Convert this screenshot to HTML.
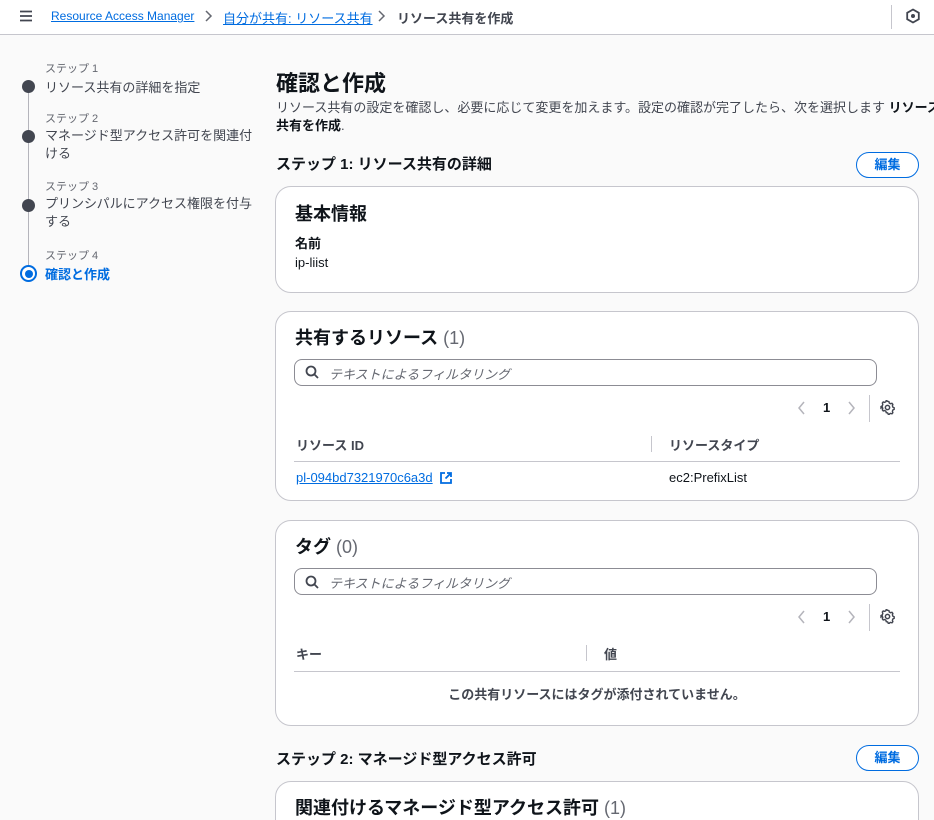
<!DOCTYPE html>
<html style="overflow:hidden;height:820px"><head><meta charset="utf-8"><style>
*{box-sizing:border-box;margin:0;padding:0}
body{width:934px;height:820px;overflow:hidden;background:#fafafa;font-family:"Liberation Sans","Noto Sans CJK JP",sans-serif;color:#0f141a;font-size:13px;position:relative}
.a{position:absolute;white-space:nowrap}
.hdr{position:absolute;left:0;top:0;width:934px;height:35px;background:#fff;border-bottom:1px solid #c6c6cd}
a{color:#006ce0;text-decoration:underline}
.sl{color:#656871;font-size:11px}
.dot{position:absolute;left:22px;width:13px;height:13px;border-radius:50%;background:#424650}
.card{position:absolute;left:275px;width:644px;background:#fff;border:1px solid #c6c6cd;border-radius:16px}
.h2{font-size:18px;font-weight:bold}
.cnt{color:#656871;font-weight:normal}
.btn{position:absolute;left:856px;width:63px;height:26px;border:1.5px solid #006ce0;border-radius:14px;color:#006ce0;font-weight:bold;font-size:13px;text-align:center;line-height:23px;background:#fff}
.srch{position:absolute;left:294px;width:583px;height:27px;border:1px solid #8c8c94;border-radius:8px;background:#fff}
.srch span{position:absolute;left:34px;top:5px;color:#656871;font-style:italic;font-size:13px}
.hr{position:absolute;left:294px;width:606px;height:1px;background:#c6c6cd}
.vd{position:absolute;width:1px;background:#c6c6cd}
</style></head><body>
<div class="hdr"></div>
<svg class="a" style="left:19px;top:9px" width="14" height="14" viewBox="0 0 14 14"><path d="M1 2.5h12M1 7h12M1 11.5h12" stroke="#424650" stroke-width="1.8"/></svg>
<div class="a" style="left:51px;top:8px;font-size:12px;top:9px"><a>Resource Access Manager</a></div>
<svg class="a" style="left:204px;top:10px" width="10" height="12"><path d="M2 1l5 5-5 5" stroke="#656871" stroke-width="1.5" fill="none"/></svg>
<div class="a" style="left:223px;top:8px"><a>自分が共有: リソース共有</a></div>
<svg class="a" style="left:377px;top:10px" width="10" height="12"><path d="M2 1l5 5-5 5" stroke="#656871" stroke-width="1.5" fill="none"/></svg>
<div class="a" style="left:397px;top:8px;color:#424650;font-weight:bold">リソース共有を作成</div>
<div class="vd" style="left:891px;top:5px;height:24px"></div>
<svg class="a" style="left:905px;top:8px" width="16" height="16" viewBox="0 0 16 16"><path d="M8 1.5l5.8 3.3v6.4L8 14.5 2.2 11.2V4.8z" fill="none" stroke="#424650" stroke-width="1.8"/><circle cx="8" cy="8" r="2" fill="#424650"/></svg>

<div class="vd" style="left:28px;top:90px;height:180px;background:#b4b4bb"></div>
<div class="a sl" style="left:45px;top:60px">ステップ 1</div>
<div class="dot" style="top:80px"></div>
<div class="a" style="left:45px;top:77px;color:#424650">リソース共有の詳細を指定</div>
<div class="a sl" style="left:45px;top:110px">ステップ 2</div>
<div class="dot" style="top:130px"></div>
<div class="a" style="left:45px;top:127px;color:#424650;line-height:18px">マネージド型アクセス許可を関連付<br>ける</div>
<div class="a sl" style="left:45px;top:178px">ステップ 3</div>
<div class="dot" style="top:199px"></div>
<div class="a" style="left:45px;top:195px;color:#424650;line-height:18px">プリンシパルにアクセス権限を付与<br>する</div>
<div class="a sl" style="left:45px;top:247px">ステップ 4</div>
<div class="a" style="left:20px;top:265px;width:17px;height:17px;border-radius:50%;border:2px solid #006ce0;background:#fff"></div>
<div class="a" style="left:24.5px;top:269.5px;width:8px;height:8px;border-radius:50%;background:#006ce0"></div>
<div class="a" style="left:45px;top:264px;color:#006ce0;font-weight:bold">確認と作成</div>

<div class="a" style="left:276px;top:66px;font-size:22px;font-weight:bold">確認と作成</div>
<div class="a" style="left:276px;top:99px;color:#424650;line-height:18px">リソース共有の設定を確認し、必要に応じて変更を加えます。設定の確認が完了したら、次を選択します <b style="color:#0f141a">リソース</b><br><b style="color:#0f141a">共有を作成</b>.</div>
<div class="a" style="left:276px;top:153px;font-size:15px;font-weight:bold">ステップ 1: リソース共有の詳細</div>
<div class="btn" style="top:152px">編集</div>

<div class="card" style="top:186px;height:107px"></div>
<div class="a h2" style="left:295px;top:200px">基本情報</div>
<div class="a" style="left:295px;top:233px;font-weight:bold">名前</div>
<div class="a" style="left:295px;top:255px">ip-liist</div>

<div class="card" style="top:311px;height:190px"></div>
<div class="a h2" style="left:295px;top:324px">共有するリソース <span class="cnt">(1)</span></div>
<div class="srch" style="top:359px"><span style="top:4px">テキストによるフィルタリング</span></div>
<svg class="a" style="left:305px;top:365px" width="14" height="14"><circle cx="6" cy="6" r="4.5" stroke="#424650" stroke-width="1.8" fill="none"/><path d="M9.5 9.5l3.5 3.5" stroke="#424650" stroke-width="1.8"/></svg>
<svg class="a" style="left:797px;top:401px" width="10" height="14"><path d="M7 1L2 7l5 6" stroke="#b4b4bb" stroke-width="1.5" fill="none"/></svg>
<div class="a" style="left:823px;top:400px;font-weight:bold">1</div>
<svg class="a" style="left:847px;top:401px" width="10" height="14"><path d="M2 1l5 6-5 6" stroke="#b4b4bb" stroke-width="1.5" fill="none"/></svg>
<div class="vd" style="left:869px;top:395px;height:27px"></div>
<svg class="a" style="left:880px;top:400px" width="15" height="15" viewBox="0 0 16 16"><path d="M8 1.5l1.5.3.4 1.6 1.4.8 1.6-.5 1 1.2-.5 1.6.5 1.5 1.5.8v1.6l-1.5.8-.5 1.5.5 1.6-1 1.2-1.6-.5-1.4.8-.4 1.6L8 14.5l-1.5-.3-.4-1.6-1.4-.8-1.6.5-1-1.2.5-1.6-.5-1.5L.6 9V7.3l1.5-.8.5-1.5-.5-1.6 1-1.2 1.6.5 1.4-.8.4-1.6z" fill="none" stroke="#424650" stroke-width="1.6" transform="translate(0.5 0) scale(.95)"/><circle cx="8" cy="8" r="2.3" fill="none" stroke="#424650" stroke-width="1.6"/></svg>
<div class="a" style="left:296px;top:435px;font-weight:bold;color:#424650">リソース ID</div>
<div class="vd" style="left:651px;top:436px;height:16px"></div>
<div class="a" style="left:669px;top:435px;font-weight:bold;color:#424650">リソースタイプ</div>
<div class="hr" style="top:461px"></div>
<div class="a" style="left:296px;top:470px"><a>pl-094bd7321970c6a3d</a></div>
<svg class="a" style="left:439px;top:471px" width="14" height="14"><path d="M6 2H2v10h10V8" stroke="#006ce0" stroke-width="1.8" fill="none"/><path d="M8 2h4v4M12 2L6.5 7.5" stroke="#006ce0" stroke-width="1.8" fill="none"/></svg>
<div class="a" style="left:669px;top:470px">ec2:PrefixList</div>

<div class="card" style="top:520px;height:206px"></div>
<div class="a h2" style="left:295px;top:533px">タグ <span class="cnt">(0)</span></div>
<div class="srch" style="top:568px"><span style="top:4px">テキストによるフィルタリング</span></div>
<svg class="a" style="left:305px;top:575px" width="14" height="14"><circle cx="6" cy="6" r="4.5" stroke="#424650" stroke-width="1.8" fill="none"/><path d="M9.5 9.5l3.5 3.5" stroke="#424650" stroke-width="1.8"/></svg>
<svg class="a" style="left:797px;top:610px" width="10" height="14"><path d="M7 1L2 7l5 6" stroke="#b4b4bb" stroke-width="1.5" fill="none"/></svg>
<div class="a" style="left:823px;top:609px;font-weight:bold">1</div>
<svg class="a" style="left:847px;top:610px" width="10" height="14"><path d="M2 1l5 6-5 6" stroke="#b4b4bb" stroke-width="1.5" fill="none"/></svg>
<div class="vd" style="left:869px;top:604px;height:27px"></div>
<svg class="a" style="left:880px;top:609px" width="15" height="15" viewBox="0 0 16 16"><path d="M8 1.5l1.5.3.4 1.6 1.4.8 1.6-.5 1 1.2-.5 1.6.5 1.5 1.5.8v1.6l-1.5.8-.5 1.5.5 1.6-1 1.2-1.6-.5-1.4.8-.4 1.6L8 14.5l-1.5-.3-.4-1.6-1.4-.8-1.6.5-1-1.2.5-1.6-.5-1.5L.6 9V7.3l1.5-.8.5-1.5-.5-1.6 1-1.2 1.6.5 1.4-.8.4-1.6z" fill="none" stroke="#424650" stroke-width="1.6" transform="translate(0.5 0) scale(.95)"/><circle cx="8" cy="8" r="2.3" fill="none" stroke="#424650" stroke-width="1.6"/></svg>
<div class="a" style="left:296px;top:644px;font-weight:bold;color:#424650">キー</div>
<div class="vd" style="left:586px;top:645px;height:16px"></div>
<div class="a" style="left:604px;top:644px;font-weight:bold;color:#424650">値</div>
<div class="hr" style="top:671px"></div>
<div class="a" style="left:294px;width:606px;top:684px;text-align:center;font-weight:bold;color:#424650">この共有リソースにはタグが添付されていません。</div>

<div class="a" style="left:276px;top:748px;font-size:15px;font-weight:bold">ステップ 2: マネージド型アクセス許可</div>
<div class="btn" style="top:745px">編集</div>
<div class="card" style="top:781px;height:80px"></div>
<div class="a h2" style="left:295px;top:794px">関連付けるマネージド型アクセス許可 <span class="cnt">(1)</span></div>
</body></html>
